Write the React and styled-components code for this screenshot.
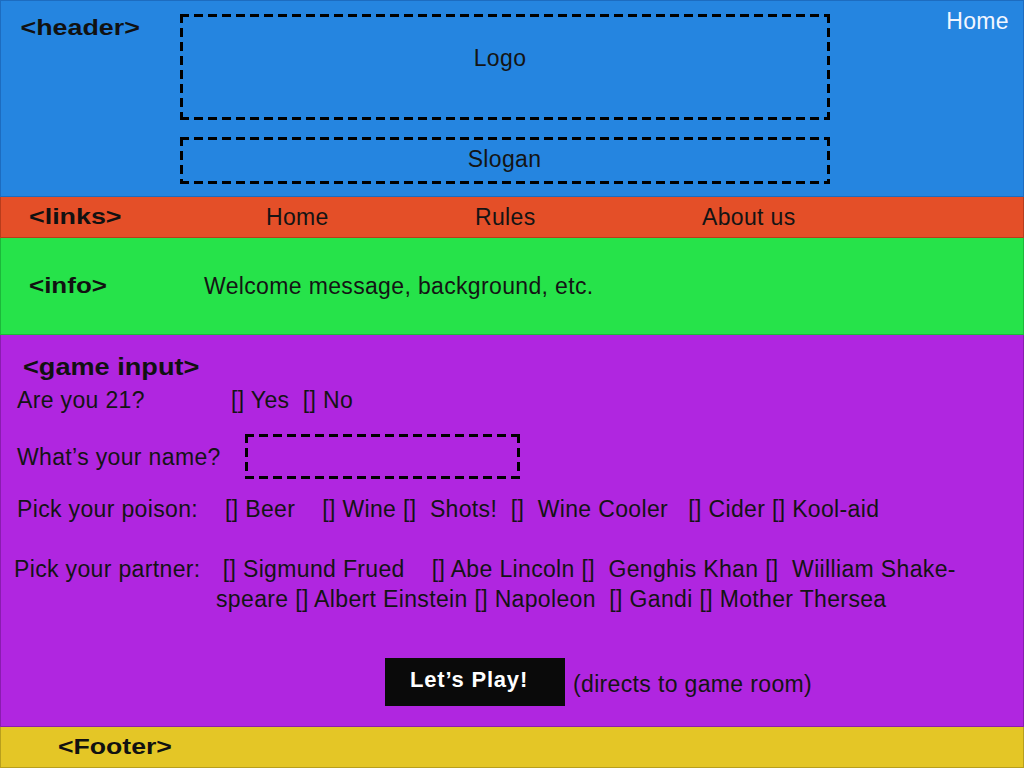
import React from 'react'
import styled, { createGlobalStyle } from 'styled-components'

const GlobalStyle = createGlobalStyle`
    html, body {
        margin: 0;
        padding: 0;
    }
    body {
        font-family: "Liberation Sans", Arial, sans-serif;
        color: #141414;
    }
    * {
        box-sizing: border-box;
    }
`

const Page = styled.div`
    width: 1024px;
    height: 768px;
    display: flex;
    flex-direction: column;
    overflow: hidden;
`

const Section = styled.section`
    height: ${props => props.$h}px;
    background: ${props => props.$bg};
    border: 1px solid ${props => props.$line};
    border-top: none;
`

// the mockup labels are stretched bold text
const Tag = styled.div`
    font-weight: bold;
    font-size: ${props => props.$size || 22}px;
    line-height: 26px;
    color: #111;
    white-space: nowrap;
    transform: scaleX(${props => props.$stretch || 1.22});
    transform-origin: left center;
`

const Text = styled.div`
    font-size: 23px;
    letter-spacing: 0.35px;
    line-height: 26px;
    white-space: pre;
    color: ${props => props.$color || '#141414'};
`

const dashes = (dir) => `repeating-linear-gradient(${dir}, #000 0 9px, transparent 9px 14px)`

const DashedBox = styled.div`
    height: ${props => props.$h}px;
    width: ${props => props.$w ? props.$w + 'px' : 'auto'};
    display: flex;
    align-items: flex-start;
    justify-content: center;
    padding-top: ${props => props.$pt || 0}px;
    padding-right: ${props => props.$pr || 0}px;
    background:
        ${dashes('90deg')} top left / 100% 3px no-repeat,
        ${dashes('90deg')} bottom left / 100% 3px no-repeat,
        ${dashes('180deg')} top left / 3px 100% no-repeat,
        ${dashes('180deg')} top right / 3px 100% no-repeat;
`

/* header */
const HeaderGrid = styled.div`
    display: grid;
    grid-template-columns: 179px 650px 1fr;
    height: 100%;
    border-top: 1px solid #1d6cc0;
`
const HeaderLabel = styled(Tag)`
    padding: 14px 0 0 16px;
`
const BoxColumn = styled.div`
    display: flex;
    flex-direction: column;
    gap: 17px;
    padding-top: 13px;
`
const TopLink = styled(Text)`
    justify-self: end;
    padding: 7px 14px 0 0;
`

/* links & info */
const Bar = styled.div`
    display: grid;
    grid-template-columns: ${props => props.$cols};
    align-items: center;
    height: 100%;
    padding-left: 28px;
`

/* game input */
const Game = styled.div`
    display: flex;
    flex-direction: column;
    padding: 18px 0 0 16px;
`
const Title = styled(Tag)`
    line-height: 28px;
    margin-left: 6px;
`
const Row = styled.div`
    display: grid;
    grid-template-columns: ${props => props.$label}px auto;
    align-items: ${props => props.$align || 'center'};
    margin-top: ${props => props.$top}px;
`
const Options = styled(Text)`
    line-height: 30px;
`
const PartnerLabel = styled(Text)`
    line-height: 30px;
    margin-left: -3px;
`
const PlayRow = styled.div`
    display: flex;
    align-items: center;
    margin: 44px 0 0 368px;
`
const PlayButton = styled.button`
    width: 180px;
    height: 48px;
    border: none;
    background: #0a0a0a;
    color: #fff;
    font-family: "Liberation Sans", Arial, sans-serif;
    font-weight: bold;
    font-size: 22px;
    letter-spacing: 0.8px;
    text-align: left;
    padding: 0 0 4px 25px;
`
const Note = styled(Text)`
    margin: 4px 0 0 8px;
`

const FooterBar = styled.div`
    height: 100%;
    display: flex;
    align-items: center;
    padding-left: 57px;
`

const App = () => {
  return (
    <Page>
      <GlobalStyle />
      <Section $h={197} $bg="#2585e0" $line="#1d6cc0">
        <HeaderGrid>
          <HeaderLabel>&lt;header&gt;</HeaderLabel>
          <BoxColumn>
            <DashedBox $h={106} $pt={31} $pr={10}><Text>Logo</Text></DashedBox>
            <DashedBox $h={47} $pt={9} $pr={1}><Text>Slogan</Text></DashedBox>
          </BoxColumn>
          <TopLink $color="#f2f6ff">Home</TopLink>
        </HeaderGrid>
      </Section>

      <Section $h={41} $bg="#e44f28" $line="#b83c1c">
        <Bar $cols="237px 209px 227px 1fr">
          <Tag>&lt;links&gt;</Tag>
          <Text>Home</Text>
          <Text>Rules</Text>
          <Text>About us</Text>
        </Bar>
      </Section>

      <Section $h={97} $bg="#26e34a" $line="#1cb83a">
        <Bar $cols="175px 1fr">
          <Tag $stretch={1.18}>&lt;info&gt;</Tag>
          <Text>Welcome message, background, etc.</Text>
        </Bar>
      </Section>

      <Section $h={392} $bg="#b026e0" $line="#8a1cb0">
        <Game>
          <Title $size={24} $stretch={1.13}>&lt;game input&gt;</Title>
          <Row $label={214} $top={6}>
            <Text>Are you 21?</Text>
            <Text>[] Yes  [] No</Text>
          </Row>
          <Row $label={228} $top={21}>
            <Text>What’s your name?</Text>
            <DashedBox $h={45} $w={275} />
          </Row>
          <Row $label={208} $top={17}>
            <Text>Pick your poison:</Text>
            <Text>[] Beer    [] Wine []  Shots!  []  Wine Cooler   [] Cider [] Kool-aid</Text>
          </Row>
          <Row $label={199} $top={32} $align="start">
            <PartnerLabel>Pick your partner:</PartnerLabel>
            <Options>
              {' [] Sigmund Frued    [] Abe Lincoln []  Genghis Khan []  Wiilliam Shake-'}
              <br />
              {'speare [] Albert Einstein [] Napoleon  [] Gandi [] Mother Thersea'}
            </Options>
          </Row>
          <PlayRow>
            <PlayButton>Let’s Play!</PlayButton>
            <Note>(directs to game room)</Note>
          </PlayRow>
        </Game>
      </Section>

      <Section $h={41} $bg="#e4c626" $line="#b89f1c">
        <FooterBar>
          <Tag $stretch={1.21}>&lt;Footer&gt;</Tag>
        </FooterBar>
      </Section>
    </Page>
  )
}

export default App
